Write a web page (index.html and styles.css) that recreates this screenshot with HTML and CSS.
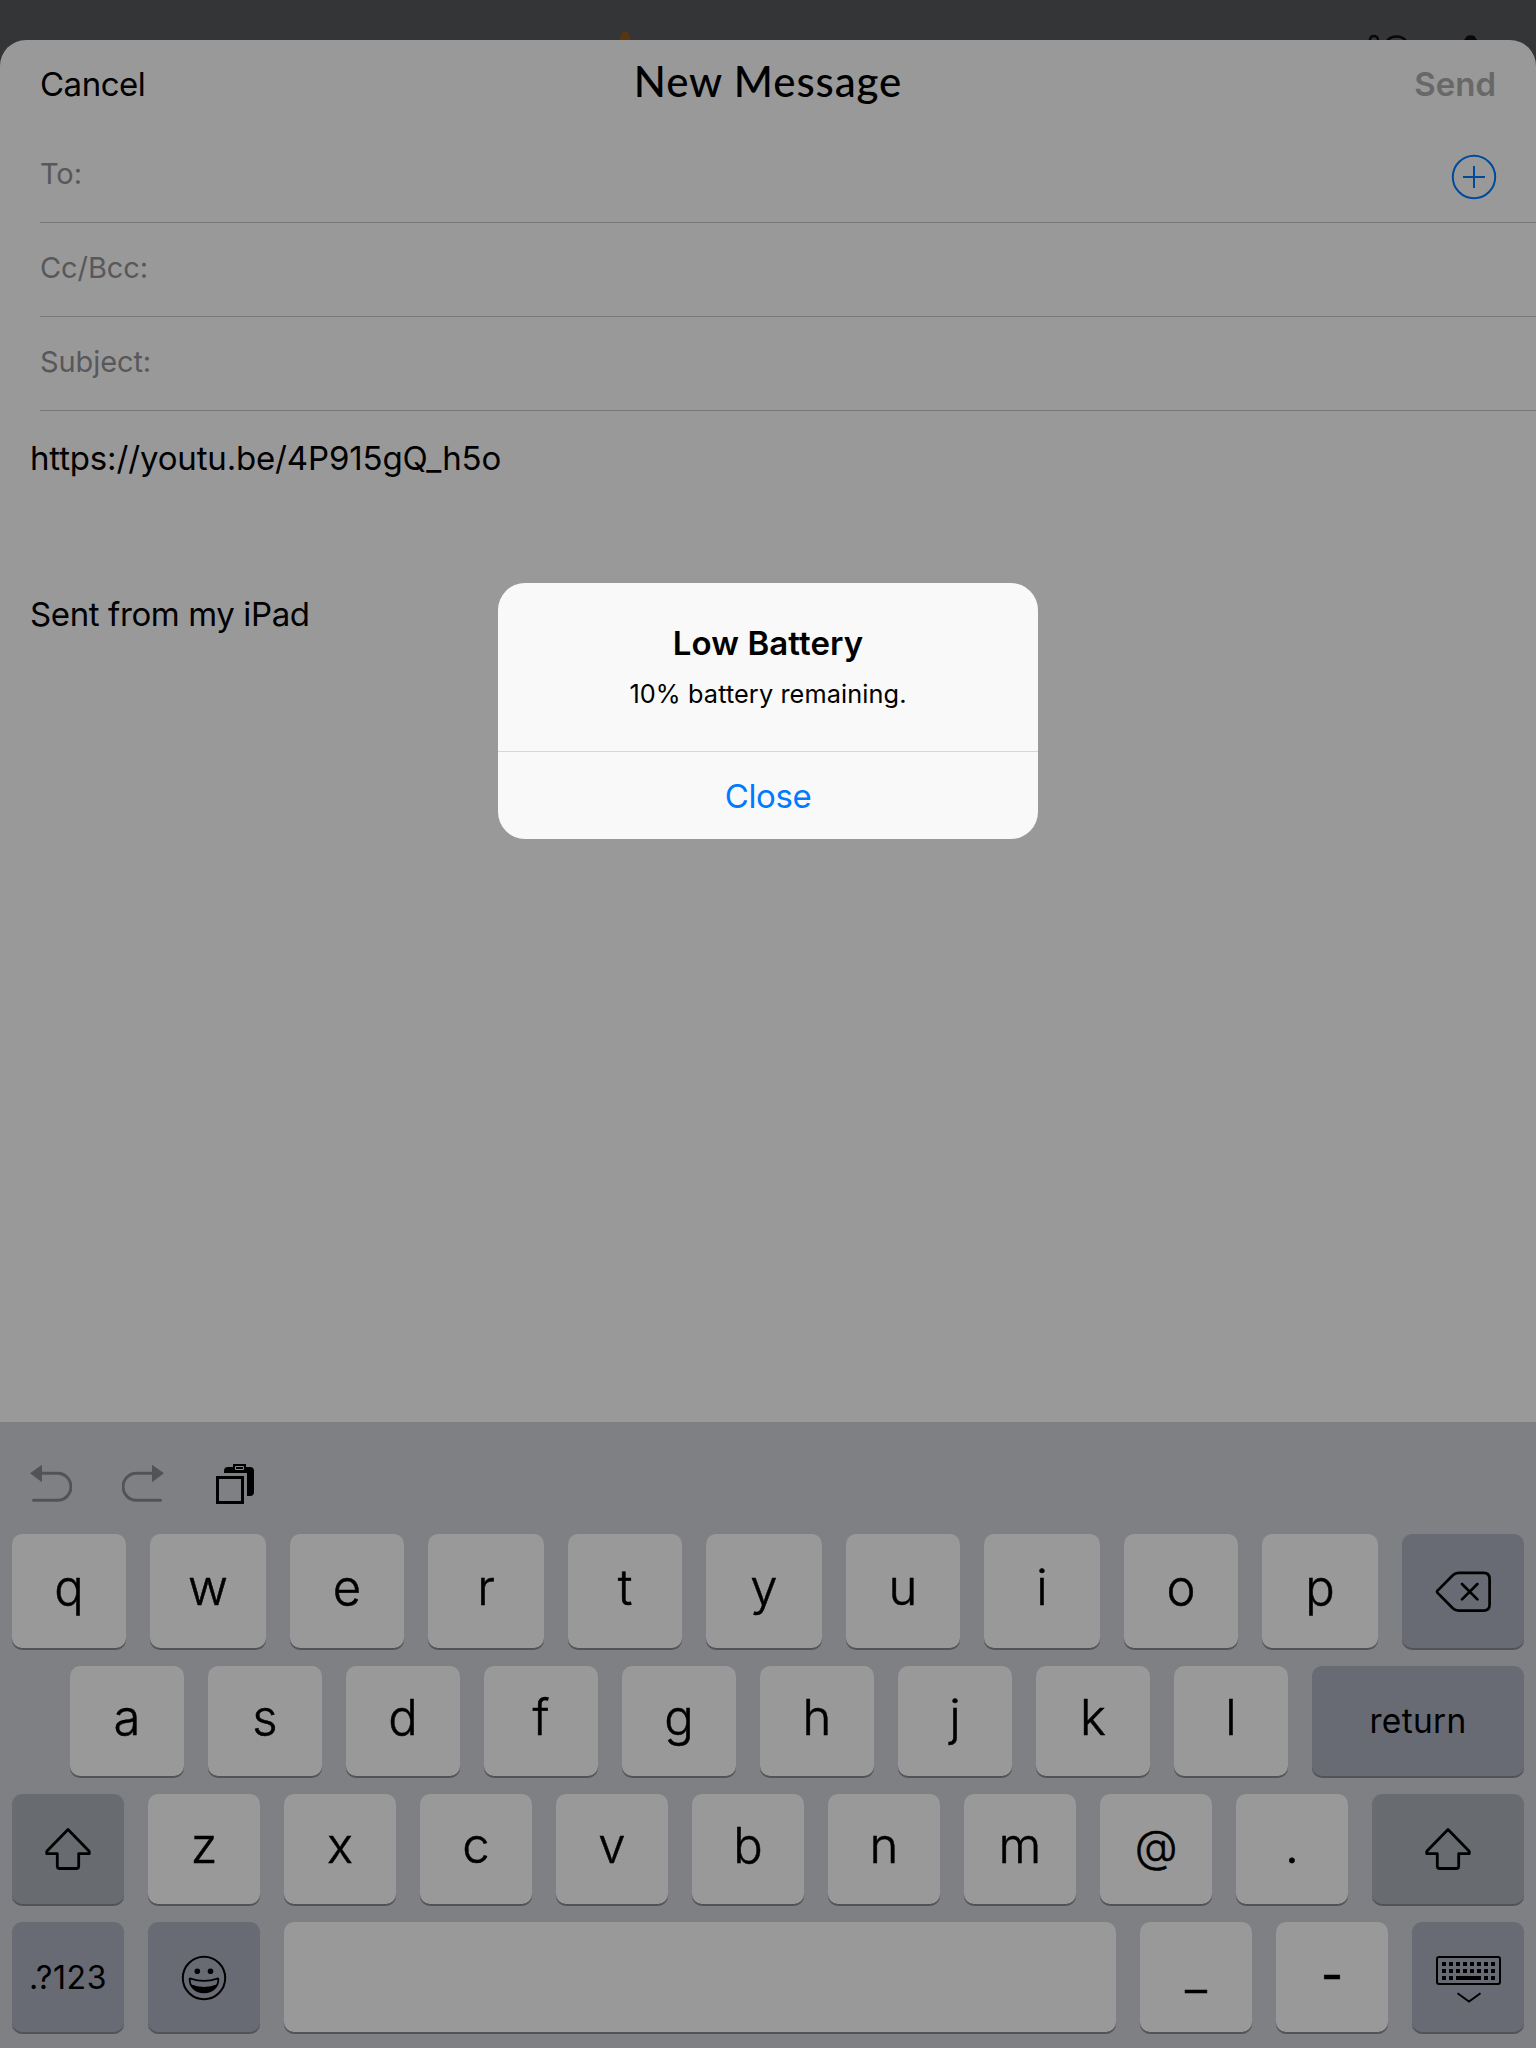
FILE: index.html
```
<!DOCTYPE html>
<html lang="en">
<head>
<meta charset="utf-8">
<title>New Message</title>
<link rel="stylesheet" href="styles.css">
</head>
<body>
<div class="screen">
  <div class="backdrop">
    <svg width="1536" height="40" viewBox="0 0 1536 40">
      <path d="M619 40C621 34 622.5 31 625 31S629 34 631 40Z" fill="#573414"/>
      <path d="M1370 40C1370 34.500 1378 34.500 1378 40M1387 41C1391 35 1402 35 1406 41" fill="none" stroke="#08080a" stroke-width="2.500"/>
      <path d="M1464 40L1467 36Q1471 34.500 1474.500 36L1477 40Z" fill="#08080a"/>
    </svg>
  </div>

  <main class="sheet">
    <header class="nav">
      <span class="cancel">Cancel</span>
      <h1 class="title">New Message</h1>
      <span class="send">Send</span>
    </header>
    <div class="fields">
      <div class="field">
        <span>To:</span>
        <svg class="add" width="46" height="46" viewBox="0 0 46 46" fill="none" stroke="#004a9b" stroke-width="2">
          <circle cx="23" cy="23" r="21.200"/><path d="M12 23H34M23 12V34"/>
        </svg>
      </div>
      <div class="field"><span>Cc/Bcc:</span></div>
      <div class="field"><span>Subject:</span></div>
    </div>
    <div class="message">
      <p class="link">https://youtu.be/4P915gQ_h5o</p>
      <p class="signature">Sent from my iPad</p>
    </div>
  </main>

  <section class="keyboard">
    <div class="tools">
      <svg width="42" height="40" viewBox="0 0 42 40"><path d="M0 9.300L12 .7V18.300Z" fill="#525356"/><path d="M11 9.300H27.500a13.500 13.500 0 0 1 0 27H3.500" fill="none" stroke="#525356" stroke-width="3" stroke-linecap="round"/></svg>
      <svg width="42" height="40" viewBox="0 0 42 40"><path d="M42 9.300L30 .7V18.300Z" fill="#525356"/><path d="M31 9.300H14.500a13.500 13.500 0 0 0 0 27H38.500" fill="none" stroke="#525356" stroke-width="3" stroke-linecap="round"/></svg>
      <svg class="paste" width="38" height="40" viewBox="0 0 38 40">
        <path d="M8 9V7Q8 3 12 3H17V0H30V3H34Q38 3 38 7V28Q38 32 34 32H31V9Z"/>
        <path d="M19.500 2.500H27.500V5.500H19.500Z" fill="none" stroke="#8a8b8e"/>
        <path d="M1.500 13.500H26.500V38.500H1.500Z" fill="none" stroke="#000" stroke-width="3"/>
      </svg>
    </div>

    <div class="rows">
      <div class="row row-1">
        <div class="key">q</div><div class="key">w</div><div class="key">e</div><div class="key">r</div><div class="key">t</div><div class="key">y</div><div class="key">u</div><div class="key">i</div><div class="key">o</div><div class="key">p</div>
        <div class="key dark delete">
          <svg width="58" height="42" viewBox="0 0 58 42" fill="none" stroke="#000" stroke-width="2.700" stroke-linecap="round" stroke-linejoin="round">
            <path d="M3.600 19.600L18.800 4.300Q21.300 1.900 24.500 1.900H49.500Q55.600 1.900 55.600 8V33.500Q55.600 39.600 49.500 39.600H24.500Q21.300 39.600 18.800 37.200L3.600 21.900Q2.400 20.700 3.600 19.600Z"/>
            <path d="M28 13L43.400 28.400M43.400 13L28 28.400"/>
          </svg>
        </div>
      </div>
      <div class="row row-2">
        <div class="key">a</div><div class="key">s</div><div class="key">d</div><div class="key">f</div><div class="key">g</div><div class="key">h</div><div class="key">j</div><div class="key">k</div><div class="key">l</div>
        <div class="key dark return">return</div>
      </div>
      <div class="row row-3">
        <div class="key dark shift">
          <svg width="48" height="44" viewBox="0 0 48 44" fill="none" stroke="#000" stroke-width="2.800" stroke-linejoin="round"><path d="M24 2.500L44.700 23.700Q45.800 25.200 45.200 26.700H34.700V39Q34.700 41.500 32.200 41.500H15.800Q13.300 41.500 13.300 39V26.700H2.800Q2.200 25.200 3.300 23.700Z"/></svg>
        </div>
        <div class="key">z</div><div class="key">x</div><div class="key">c</div><div class="key">v</div><div class="key">b</div><div class="key">n</div><div class="key">m</div><div class="key at">@</div><div class="key">.</div>
        <div class="key dark shift">
          <svg width="48" height="44" viewBox="0 0 48 44" fill="none" stroke="#000" stroke-width="2.800" stroke-linejoin="round"><path d="M24 2.500L44.700 23.700Q45.800 25.200 45.200 26.700H34.700V39Q34.700 41.500 32.200 41.500H15.800Q13.300 41.500 13.300 39V26.700H2.800Q2.200 25.200 3.300 23.700Z"/></svg>
        </div>
      </div>
      <div class="row row-4">
        <div class="key dark numbers">.?123</div>
        <div class="key dark emoji">
          <svg width="46" height="46" viewBox="0 0 46 46">
            <circle cx="23" cy="23" r="21.200" fill="none" stroke="#000" stroke-width="2"/>
            <circle cx="16.300" cy="16.300" r="2.800"/><circle cx="29.500" cy="16.300" r="2.800"/>
            <path d="M8.600 23.900Q8.700 23.300 9.600 23.600Q23 28.300 36.400 23.600Q37.300 23.300 37.400 23.900C37.300 32 31.500 37.400 23 37.400S8.700 32 8.600 23.900Z" fill="none" stroke="#000" stroke-width="1.800"/>
            <path d="M9.600 29.300Q23 34.500 36.400 29.300C34 34.700 29.500 37.600 23 37.600S12 34.700 9.600 29.300Z"/>
          </svg>
        </div>
        <div class="key"></div>
        <div class="key symbol">_</div>
        <div class="key hyphen">-</div>
        <div class="key dark hide">
          <svg width="65" height="48" viewBox="0 0 65 48">
            <rect x="1" y="1" width="63" height="27" rx="2" fill="none" stroke="#000" stroke-width="2"/>
            <path d="M6 8H61M6 15H61" stroke="#000" stroke-width="4" stroke-dasharray="4 3" fill="none"/>
            <path d="M6 20h4v4h-4zM13 20h4v4h-4zM20 20h25v4h-25zM48 20h4v4h-4zM55 20h4v4h-4z"/>
            <path d="M21.500 37.300L33 45.500L44.500 37.300" fill="none" stroke="#000" stroke-width="2"/>
          </svg>
        </div>
      </div>
    </div>
  </section>

  <div class="alert">
    <div class="alert-body">
      <h2>Low Battery</h2>
      <p>10% battery remaining.</p>
    </div>
    <div class="alert-action">Close</div>
  </div>
</div>
</body>
</html>
```

FILE: styles.css
```
* { box-sizing: border-box; }
body, h1, h2, p { margin: 0; }
svg { display: block; flex: none; }

.screen {
  position: relative;
  display: flex;
  flex-direction: column;
  width: 1536px;
  height: 2048px;
  overflow: hidden;
  background: #343537;
  font-family: Inter, "Liberation Sans", sans-serif;
  color: #000;
}
.backdrop { height: 40px; flex: none; }

.sheet {
  height: 1382px;
  flex: none;
  background: #999;
  border-radius: 26px 26px 0 0;
}
.nav {
  display: grid;
  grid-template-columns: 1fr auto 1fr;
  align-items: center;
  height: 89px;
  padding: 0 40px;
  font-size: 33px;
}
.cancel { padding-bottom: 2px; letter-spacing: -0.5px; }
.title {
  padding-bottom: 7px;
  font: 500 42px Lato, sans-serif;
  letter-spacing: 0.9px;
}
.send {
  justify-self: end;
  padding-bottom: 2px;
  font-weight: 600;
  color: #686868;
}

.fields { padding-left: 40px; }
.field {
  display: flex;
  justify-content: space-between;
  align-items: center;
  height: 94px;
  padding: 0 39px 4px 0;
  border-bottom: 1px solid #77777a;
  font-size: 29px;
  letter-spacing: -0.1px;
  color: #58585a;
}
.add { margin-top: 7px; }

.message {
  padding: 28px 30px;
  font-size: 33px;
  line-height: 39px;
}
.link { letter-spacing: -0.16px; }
.signature { margin-top: 117px; letter-spacing: -0.38px; }

.keyboard {
  flex: 1;
  background: #7f8084;
}
.tools {
  display: flex;
  gap: 50px;
  height: 112px;
  padding: 42px 30px 0;
}
.paste { margin-left: 2px; }

.rows {
  display: grid;
  grid-template-rows: 114px 110px 110px 110px;
  gap: 18px;
  padding: 0 12px;
}
.row { display: grid; column-gap: 24px; }
.row-1 { grid-template-columns: repeat(5, 114px 116px) 122px; }
.row-2 { grid-template-columns: repeat(9, 114px) 212px; padding-left: 58px; }
.row-3 { grid-template-columns: repeat(10, 112px) 152px; }
.row-4 { grid-template-columns: 112px 112px 832px 112px 112px 112px; }

.key {
  display: flex;
  justify-content: center;
  align-items: center;
  padding-bottom: 7px;
  border-radius: 10px;
  background: #999;
  box-shadow: 0 2px 0 #525356;
  font-size: 49px;
  font-weight: 300;
  line-height: 60px;
  -webkit-text-stroke: 0.5px #000;
}
.key.dark {
  padding-bottom: 0;
  background: #686b73;
  font-weight: 400;
  -webkit-text-stroke: 0;
}
.key.dark.shift { background: #686c70; }
.key.return { font-size: 33.5px; letter-spacing: 0.3px; }
.key.dark.numbers { padding-top: 2px; font-size: 32px; letter-spacing: 0.6px; }
.key.at { font-size: 44px; }
.key.symbol { padding-bottom: 8px; }
.key.hyphen { padding-bottom: 5px; font-weight: 400; }
.key.dark.delete { padding-top: 2px; }
.key.dark.emoji { padding-top: 2px; }
.key.dark.hide { padding-top: 6px; }

.alert {
  position: absolute;
  left: 498px;
  top: 583px;
  width: 540px;
  height: 256px;
  border-radius: 27px;
  background: #f9f9f9;
  text-align: center;
}
.alert-body {
  height: 169px;
  padding-top: 40px;
  border-bottom: 1px solid #d7d7d7;
}
.alert h2 { font-size: 33px; font-weight: 600; line-height: 40px; letter-spacing: 0.1px; }
.alert p {
  margin-top: 15px;
  font-size: 25.3px;
  line-height: 32px;
  letter-spacing: 0.1px;
}
.alert-action {
  font-size: 33px;
  line-height: 89px;
  letter-spacing: -0.4px;
  color: #007aff;
}
```
